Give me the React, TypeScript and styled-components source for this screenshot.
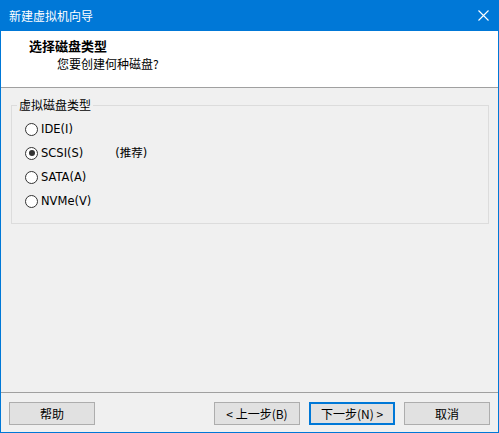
import { ReactElement } from "react";
import styled, { createGlobalStyle } from "styled-components";

const WinBlue = "#0078d7";
const DialogBg = "#f0f0f0";
const UiFont = `"Noto Sans CJK SC", "Noto Sans", sans-serif`;
const LabelFont = `"DejaVu Sans", "Noto Sans CJK SC", sans-serif`;

const GlobalStyle = createGlobalStyle`
  html, body {
    margin: 0;
    padding: 0;
    background: ${DialogBg};
  }
  * {
    box-sizing: border-box;
  }
`;

const diskTypes = [
  { id: "ide", label: "IDE(I)", checked: false, hint: "" },
  { id: "scsi", label: "SCSI(S)", checked: true, hint: "(推荐)" },
  { id: "sata", label: "SATA(A)", checked: false, hint: "" },
  { id: "nvme", label: "NVMe(V)", checked: false, hint: "" },
];

export default function App() {
  return (
    <>
      <GlobalStyle />
      <Window>
        <TitleBar>
          <TitleText>新建虚拟机向导</TitleText>
          <CloseButton>
            <svg width="11" height="11" viewBox="0 0 11 11">
              <path d="M0.5 0.5 L10.5 10.5 M10.5 0.5 L0.5 10.5" stroke="#fff" strokeWidth="1.1" fill="none" />
            </svg>
          </CloseButton>
        </TitleBar>
        <Header>
          <HeaderTitle>选择磁盘类型</HeaderTitle>
          <HeaderSub>您要创建何种磁盘?</HeaderSub>
        </Header>
        <Body>
          <GroupBox>
            <Legend>虚拟磁盘类型</Legend>
            <RadioList>
              {diskTypes.map((t) => (
                <RadioRow key={t.id} label={t.label} checked={t.checked} hint={t.hint} />
              ))}
            </RadioList>
          </GroupBox>
        </Body>
        <Footer>
          <Button>帮助</Button>
          <Spacer />
          <Button>&lt; 上一步(B)</Button>
          <Button $primary>下一步(N) &gt;</Button>
          <Button>取消</Button>
        </Footer>
      </Window>
    </>
  );
}

const RadioRow = ({
  label,
  checked,
  hint,
}: {
  label: string;
  checked: boolean;
  hint: string;
}): ReactElement => {
  return (
    <Row>
      <RadioCircle $checked={checked} />
      <RadioLabel>{label}</RadioLabel>
      {hint && <Hint>{hint}</Hint>}
    </Row>
  );
};

const Window = styled.div`
  width: 499px;
  height: 433px;
  display: flex;
  flex-direction: column;
  border: 1px solid ${WinBlue};
  border-top: none;
  background: ${DialogBg};
  font-family: ${UiFont};
  font-size: 12px;
  color: #000;
`;

const TitleBar = styled.div`
  height: 31px;
  flex-shrink: 0;
  display: flex;
  align-items: center;
  background: ${WinBlue};
  padding-left: 8px;
  padding-right: 9px;
`;

const TitleText = styled.div`
  flex: 1;
  color: #fff;
  font-size: 12px;
  line-height: 16px;
`;

const CloseButton = styled.div`
  width: 11px;
  height: 11px;
  display: flex;
  margin-top: -1px;
`;

const Header = styled.div`
  height: 57px;
  flex-shrink: 0;
  background: #fff;
  border-bottom: 1px solid #a0a0a0;
  padding: 6px 0 0 28px;
`;

const HeaderTitle = styled.div`
  font-size: 13px;
  font-weight: bold;
  line-height: 18px;
`;

const HeaderSub = styled.div`
  font-size: 12px;
  line-height: 18px;
  padding-left: 28px;
`;

const Body = styled.div`
  flex: 1;
  padding: 9px 9px 0 10px;
`;

const GroupBox = styled.fieldset`
  margin: 0;
  border: 1px solid #dcdcdc;
  padding: 4px 0 10px 13px;
`;

const Legend = styled.legend`
  margin-left: -8px;
  padding: 0 2px;
  font-size: 12px;
  line-height: 16px;
`;

const RadioList = styled.div`
  display: flex;
  flex-direction: column;
`;

const Row = styled.div`
  height: 24px;
  display: flex;
  align-items: center;
`;

const RadioCircle = styled.span<{ $checked: boolean }>`
  width: 13px;
  height: 13px;
  border-radius: 50%;
  border: 1px solid #333;
  background: #fff;
  display: flex;
  align-items: center;
  justify-content: center;
  flex-shrink: 0;

  &::after {
    content: "";
    display: ${(p) => (p.$checked ? "block" : "none")};
    width: 6px;
    height: 6px;
    border-radius: 50%;
    background: #333;
  }
`;

const RadioLabel = styled.span`
  margin-left: 3px;
  font-family: ${LabelFont};
  font-size: 11.5px;
  line-height: 16px;
`;

const Hint = styled.span`
  margin-left: 32px;
  font-family: ${LabelFont};
  font-size: 11.5px;
  line-height: 16px;
`;

const Footer = styled.div`
  height: 40px;
  flex-shrink: 0;
  display: flex;
  align-items: flex-start;
  gap: 9px;
  border-top: 1px solid #a0a0a0;
  padding: 9px 8px 0 8px;
`;

const Spacer = styled.div`
  flex: 1;
`;

const Button = styled.div<{ $primary?: boolean }>`
  width: 86px;
  height: 23px;
  display: flex;
  align-items: center;
  justify-content: center;
  background: #e1e1e1;
  border: ${(p) => (p.$primary ? `2px solid ${WinBlue}` : "1px solid #adadad")};
  font-size: 12px;
  line-height: 16px;
  user-select: none;
`;
